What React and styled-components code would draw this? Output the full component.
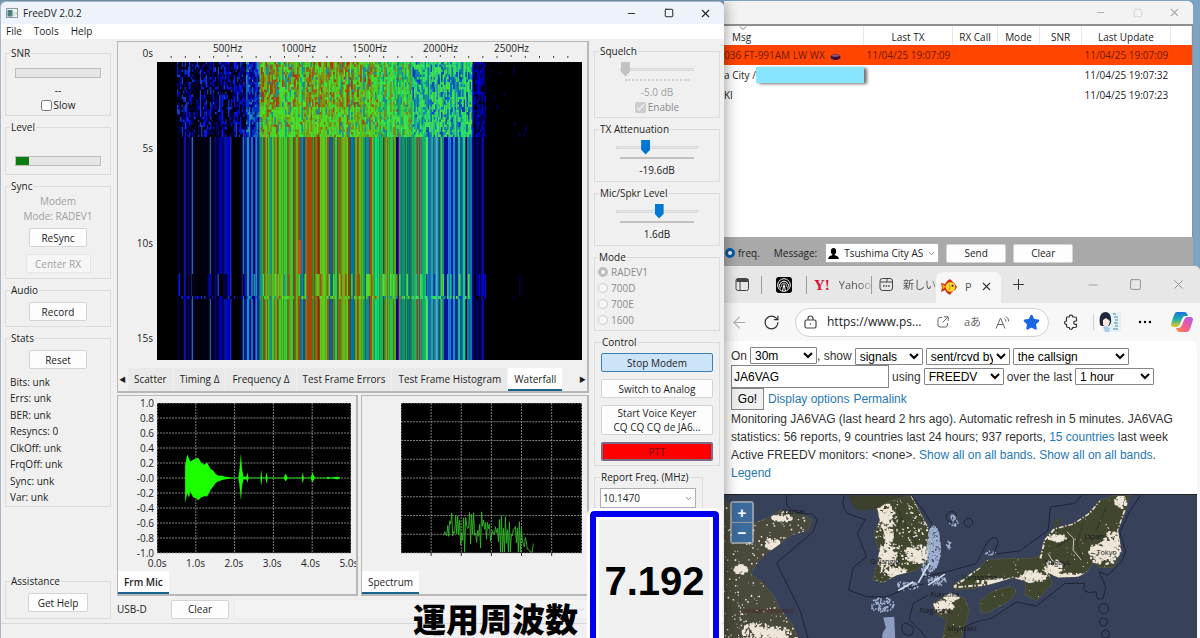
import { useState } from 'react';
import styled, { createGlobalStyle } from 'styled-components';
import { ArrowLeft, ChevronDown, Minus, Plus, RotateCw, Square, Star, X } from 'lucide-react';

const GlobalStyle = createGlobalStyle`
    * { box-sizing: border-box; }
    body {
        margin: 0;
        font-family: "Open Sans", "Noto Sans", "Noto Sans CJK JP", sans-serif;
        font-size: 10px;
        line-height: 14px;
        color: #1c1c1c;
    }
    button, input, select { font: inherit; color: inherit; margin: 0; }
`;

const Desktop = styled.div`
    display: grid;
    grid-template-columns: minmax(0, 724fr) minmax(0, 476fr);
    min-height: 100vh;
    padding-top: 1px;
    background: #7fa3c2;
    overflow: hidden;
`;

/* ---------- FreeDV window ---------- */

const MainWindow = styled.section`
    position: relative;
    z-index: 2;
    display: flex;
    flex-direction: column;
    min-width: 0;
    border-left: 1px solid #a9b7c6;
    border-top: 1px solid #a9b7c6;
    border-radius: 6px 6px 0 0;
    background: #f0f0f0;
    box-shadow: 2px 0 14px rgba(0, 0, 0, 0.35);
`;

const TitleBar = styled.header`
    display: flex;
    align-items: center;
    height: ${(p) => (p.$plain ? 23 : 22)}px;
    padding-left: 5px;
    gap: 5px;
    border-radius: 6px 6px 0 0;
    background: ${(p) => (p.$plain ? '#f3f3f3' : '#eef3fb')};
    color: ${(p) => (p.$plain ? '#aaa' : '#222')};
`;

const AppTitle = styled.h1`
    flex: 1;
    margin: 0;
    font-size: 10px;
    font-weight: 400;
`;

const WindowButtons = styled.div`
    display: flex;
`;

const WindowButton = styled.button`
    display: grid;
    place-items: center;
    width: 37px;
    height: 20px;
    padding: 0;
    border: 0;
    background: none;
    opacity: ${(p) => (p.$faint ? 0.4 : 1)};
`;

const MenuBar = styled.nav`
    display: flex;
    height: 15px;
    padding-left: 5px;
    gap: 12px;
    background: #fff;
    button {
        padding: 0;
        border: 0;
        background: none;
        line-height: 15px;
    }
`;

const Body = styled.div`
    flex: 1;
    display: flex;
    min-height: 0;
    padding: 0 4px;
`;

const SideColumn = styled.aside`
    display: flex;
    flex-direction: column;
    flex: none;
    width: ${(p) => p.$width}px;
    gap: 4px;
    padding: ${(p) => p.$top}px 0 4px;
`;

const Group = styled.fieldset`
    display: flex;
    flex-direction: column;
    align-items: ${(p) => (p.$left ? 'flex-start' : 'center')};
    width: ${(p) => p.$width || 'auto'};
    min-width: 0;
    min-height: ${(p) => p.$min}px;
    margin: ${(p) => (p.$bottom ? 'auto 0 0' : '0')};
    padding: ${(p) => p.$pad || '0 4px'};
    border: 1px solid #dcdcdc;
    legend {
        padding: 0 1px;
        line-height: 14px;
        white-space: nowrap;
    }
`;

const ControlGroup = styled(Group)`
    gap: 7px;
`;

const Gauge = styled.div`
    width: 86px;
    height: 10px;
    border: 1px solid #bcbcbc;
    background: #e6e6e6;
    div {
        height: 100%;
        background: #107c10;
    }
`;

const Gap = styled.div`
    height: ${(p) => p.$size}px;
`;

const CenterLine = styled.div`
    align-self: center;
`;

const Muted = styled.span`
    color: #a0a0a0;
    line-height: 15px;
`;

const Value = styled.output`
    color: ${(p) => (p.$off ? '#a0a0a0' : '#222')};
    line-height: 15px;
`;

const Check = styled.label`
    display: flex;
    align-items: center;
    gap: 2px;
    color: ${(p) => (p.$off ? '#8a8a8a' : '#222')};
    input {
        width: 11px;
        height: 11px;
    }
`;

const PushButton = styled.button`
    width: ${(p) => p.$width || '58px'};
    min-height: 19px;
    padding: 0 2px;
    border: 1px solid ${(p) => (p.$on ? '#3c7fb1' : '#d4d4d4')};
    border-radius: 2px;
    background: ${(p) => (p.$on ? '#cce4f7' : '#fdfdfd')};
    line-height: 14px;
    white-space: nowrap;
    &:disabled {
        border-color: #e6e6e6;
        background: #f6f6f6;
        color: #a0a0a0;
    }
`;

const PttButton = styled(PushButton)`
    border: 2px solid #7c6a86;
    background: #f00;
    color: #780808;
`;

const StatList = styled.ul`
    margin: 5px 0 0;
    padding: 0;
    list-style: none;
    li { height: 16px; line-height: 16px; }
    li:nth-child(even) { height: 17px; }
`;

const Centre = styled.main`
    flex: 1;
    display: flex;
    flex-direction: column;
    min-width: 0;
    margin: 2px 5px 0 6px;
`;

const PlotPanel = styled.section`
    display: flex;
    flex-direction: column;
    min-width: 0;
    border: 1px solid #b8b8b8;
    border-width: 1px 2px 2px 1px;
    overflow: hidden;
`;

const FrequencyAxis = styled.div`
    display: grid;
    grid-template-columns: repeat(5, 1fr);
    margin: 0 5px 0 39px;
    padding: 0 35px;
    text-align: center;
    line-height: 13px;
`;

const WaterfallRow = styled.div`
    display: grid;
    grid-template-columns: 35px minmax(0, 1fr);
    column-gap: 4px;
    padding-right: 5px;
    svg { display: block; width: 100%; }
`;

const TimeAxis = styled.div`
    display: grid;
    grid-auto-rows: 95px;
    height: 305px;
    margin-top: -9px;
    text-align: right;
    overflow: hidden;
`;

const TabStrip = styled.div`
    display: flex;
    align-items: center;
    margin-top: ${(p) => p.$top}px;
    gap: 1px;
`;

const TabArrow = styled.button`
    width: 9px;
    padding: 0;
    border: 0;
    background: none;
    font-size: 7px;
`;

const Tab = styled.button`
    height: 23px;
    padding: 0 6px;
    border: 0;
    border-bottom: 2px solid ${(p) => (p.$active ? '#1a648f' : 'transparent')};
    background: ${(p) => (p.$active ? '#fff' : '#e9e9e9')};
    font-weight: ${(p) => (p.$bold ? 600 : 400)};
    white-space: nowrap;
`;

const ScopeRow = styled.div`
    display: grid;
    grid-template-columns: 241fr 228fr;
    gap: 3px;
    margin-top: 2px;
`;

const Scope = styled.div`
    display: grid;
    grid-template-columns: 36px minmax(0, 1fr);
    column-gap: 3px;
    margin: 7px 5px 0 0;
    svg { display: block; width: 100%; height: 153px; }
`;

const LevelAxis = styled.div`
    display: flex;
    flex-direction: column;
    justify-content: space-between;
    height: 164px;
    margin: -7px 0;
    text-align: right;
`;

const SecondsAxis = styled.div`
    display: grid;
    grid-template-columns: repeat(6, 1fr);
    height: 14px;
    margin: 0 -12px 0 20px;
    text-align: center;
`;

const DeviceBar = styled.div`
    display: flex;
    align-items: center;
    margin-top: 2px;
    height: 22px;
    span { width: 54px; }
    label { margin-left: 5px; }
`;

const Combo = styled.label`
    display: flex;
    align-items: center;
    flex: ${(p) => (p.$grow ? 1 : 'none')};
    width: ${(p) => p.$width || 'auto'};
    height: 20px;
    padding: 0 2px;
    border: 1px solid ${(p) => (p.$off ? '#ebebeb' : '#b0b0b0')};
    background: ${(p) => (p.$off ? '#f3f3f3' : '#fff')};
    select {
        flex: 1;
        min-width: 0;
        padding: 0;
        border: 0;
        background: none;
        appearance: none;
    }
    svg { flex: none; }
`;

const Slider = styled.input`
    appearance: none;
    width: ${(p) => p.$width}px;
    height: 16px;
    background: none;
    &::-webkit-slider-runnable-track {
        height: 3px;
        border: 1px solid #d6d6d6;
        background: #e9eaea;
    }
    &::-webkit-slider-thumb {
        appearance: none;
        width: 9px;
        height: 15px;
        margin-top: -7px;
        background: ${(p) => (p.disabled ? '#c3c3c3' : '#0078d4')};
        clip-path: polygon(0 0, 100% 0, 100% 68%, 50% 100%, 0 68%);
    }
`;

const TickLine = styled.div`
    width: ${(p) => p.$width}px;
    margin: 2px 0 4px;
    border-top: 2px ${(p) => (p.$off ? 'dotted #cfcfcf' : 'solid #c2c2c2')};
`;

const Radio = styled.label`
    display: flex;
    align-items: center;
    gap: 3px;
    height: 16px;
    color: ${(p) => (p.$dark ? '#222' : '#8a8a8a')};
    input {
        appearance: none;
        width: 10px;
        height: 10px;
        border: 1px solid #cdcdcd;
        border-radius: 50%;
        background: #f6f6f6;
    }
    input:checked {
        border: 3px solid ${(p) => (p.$dark ? '#0a5ca4' : '#bdbdbd')};
    }
`;

const StatusBar = styled.footer`
    height: 15px;
    border-top: 1px solid #d8d8d8;
`;

const Callout = styled.div`
    position: absolute;
    right: 5px;
    bottom: -12px;
    display: grid;
    place-items: center;
    width: 129px;
    height: 139px;
    border: 6px solid #0000f0;
    border-radius: 4px;
    outline: 3px solid #fff;
    box-shadow: inset 0 0 0 3px #fff;
    background: #f0f0f0;
    color: #000;
    font-family: "Liberation Sans", Arial, sans-serif;
    font-size: 40px;
    font-weight: 700;
`;

const Caption = styled.strong`
    position: absolute;
    right: 146px;
    bottom: 2px;
    color: #000;
    font-family: "Noto Sans CJK JP", sans-serif;
    font-size: 33px;
    font-weight: 900;
    line-height: 36px;
`;

/* ---------- right side windows ---------- */

const RightSide = styled.div`
    display: flex;
    flex-direction: column;
    min-width: 0;
`;

const Reporter = styled.section`
    display: flex;
    flex-direction: column;
    height: 264px;
    margin-right: 7px;
    background: #fff;
    border-radius: 0 6px 0 0;
`;

const StationArea = styled.div`
    flex: 1;
    border: 2px solid #909090;
    border-width: 2px 1px 0 0;
    overflow: hidden;
`;

const StationTable = styled.table`
    width: 100%;
    border-collapse: collapse;
    table-layout: fixed;
    th {
        height: 19px;
        padding: 2px 0 0;
        border-right: 1px solid #e8e8e8;
        font-weight: 400;
    }
    th:first-child { padding-left: 8px; text-align: left; }
    td {
        height: 20px;
        padding: 0 0 0 3px;
        white-space: nowrap;
    }
    td:first-child { padding-left: 0; }
`;

const StationRow = styled.tr`
    background: ${(p) => (p.$alert ? '#ff4500' : 'transparent')};
    color: ${(p) => (p.$alert ? '#701800' : '#1c1c1c')};
`;

const MessageCell = styled.div`
    display: flex;
    align-items: center;
    height: 19px;
`;

const Redaction = styled.span`
    flex: 1;
    height: 16px;
    background: #87e5ff;
    box-shadow: 3px 1px 3px rgba(0, 0, 0, 0.55);
`;

const SortHeader = styled.div`
    display: grid;
    justify-items: start;
    height: 18px;
    margin-top: -3px;
    line-height: 13px;
    svg { margin-left: 7px; }
`;

const ReporterBar = styled.form`
    display: flex;
    align-items: center;
    height: 28px;
    padding: 4px 0 0 1px;
    background: #a9a9a9;
    button { margin-left: 7px; }
`;

const MessageLabel = styled.label`
    margin: 0 8px 0 14px;
`;

const MessageSelect = styled.select`
    margin-left: 5px;
`;

const Browser = styled.section`
    flex: 1;
    display: flex;
    flex-direction: column;
    min-width: 0;
    border-top: 1px solid #a7a7a7;
    border-radius: 0 6px 0 0;
    background: #f7f7f7;
`;

const TabsRow = styled.div`
    display: flex;
    align-items: center;
    height: 37px;
    border-radius: 0 6px 0 0;
    background: #e7e7e7;
    color: #555;
    font-size: 11px;
`;

const BrowserTab = styled.div`
    display: flex;
    align-items: center;
    justify-content: ${(p) => (p.$icon ? 'center' : 'flex-start')};
    flex: none;
    width: ${(p) => p.$width}px;
    height: 18px;
    padding-left: ${(p) => (p.$icon ? 0 : 7)}px;
    gap: 9px;
    border-right: 1px solid ${(p) => (p.$last ? 'transparent' : '#9c9c9c')};
    overflow: hidden;
    white-space: nowrap;
    svg { flex: none; }
    span { mask-image: linear-gradient(90deg, #000 60%, transparent); }
`;

const YahooMark = styled.b`
    color: #d8103c;
    font-family: "Liberation Serif", serif;
    font-size: 15px;
`;

const ActiveTab = styled.div`
    display: flex;
    align-items: center;
    flex: none;
    width: 65px;
    height: 31px;
    margin-top: 6px;
    padding: 0 5px 2px;
    gap: 8px;
    border-radius: 7px 7px 0 0;
    background: #f7f7f7;
`;

const IconButton = styled.button`
    display: grid;
    place-items: center;
    flex: none;
    width: ${(p) => p.$width}px;
    height: 26px;
    padding: 0;
    border: 0;
    background: none;
    color: ${(p) => p.$color || '#333'};
`;

const Spacer = styled.div`
    flex: 1;
`;

const Toolbar = styled.div`
    display: flex;
    align-items: center;
    height: 38px;
    font-size: 11px;
`;

const Address = styled.div`
    display: flex;
    align-items: center;
    flex: 1;
    min-width: 0;
    height: 29px;
    padding: 0 4px 0 8px;
    margin-left: 6px;
    border: 1px solid #d2d2d2;
    border-radius: 15px;
    background: #fff;
    svg { flex: none; }
    input {
        flex: 1;
        min-width: 0;
        padding: 0 0 0 10px;
        border: 0;
        background: none;
        font-size: 12px;
    }
`;

const Divider = styled.i`
    width: 1px;
    height: 16px;
    background: #d0d0d0;
`;

const Page = styled.div`
    flex: 1;
    display: flex;
    flex-direction: column;
    margin-right: 3px;
    border-radius: 7px 7px 0 0;
    background: #fff;
    color: #333;
    font-family: "Liberation Sans", Arial, sans-serif;
    font-size: 12px;
    line-height: 18px;
    a { color: #1f78b4; text-decoration: none; }
`;

const Filters = styled.form`
    padding: 6px 0 0 7px;
`;

const FilterRow = styled.div`
    display: flex;
    align-items: center;
    height: ${(p) => p.$height}px;
    gap: ${(p) => p.$gap || 3}px;
    white-space: nowrap;
`;

const PageSelect = styled.select`
    width: ${(p) => p.$width}px;
    height: 17px;
    border: 1px solid #858585;
    border-radius: 1px;
    background: #fff;
    color: #000;
`;

const CallInput = styled.input`
    width: 158px;
    height: 23px;
    padding: 0 2px;
    border: 1px solid #858585;
    color: #000;
`;

const GoButton = styled.button`
    width: 33px;
    height: 22px;
    padding: 0;
    border: 1px solid #858585;
    background: #f0f0f0;
    color: #000;
`;

const Summary = styled.p`
    margin: 0 7px 12px;
`;

const MapArea = styled.div`
    position: relative;
    flex: 1;
    min-height: 143px;
    border-top: 1px solid #222;
    background: #374159;
    overflow: hidden;
    svg { display: block; width: 100%; height: 143px; }
`;

const ZoomControl = styled.div`
    position: absolute;
    top: 6px;
    left: 6px;
    display: grid;
    gap: 1px;
    padding: 2px;
    border-radius: 3px;
    background: rgba(200, 210, 220, 0.6);
    button {
        width: 20px;
        height: 19px;
        padding: 0;
        border: 0;
        background: #3b6a9c;
        color: #fff;
        font-size: 15px;
        font-weight: 700;
        line-height: 16px;
    }
`;

/* ---------- plots ---------- */

const seeded = (seed) => {
    let s = seed;
    return () => {
        s = (s * 16807) % 2147483647;
        return s / 2147483647;
    };
};

// start column (thirds of a pixel) and colour of every stripe
const STRIPES = `0 000,62 000048,67 000,80 1010a0,88 000020,93 000050,104 3068b8,109 000010,158 2858a8,163 000018,
173 0000a0,178 000040,185 0000a0,195 000060,200 0010a0,210 0000c8,220 1838e0,224 000,252 000060,257 2878b8,262 0020a0,
270 2090c0,276 001890,282 1870b0,288 000080,295 2888c0,300 0028a0,307 189070,315 38b030,320 a04010,324 48c028,330 905010,
333 40c838,339 188898,345 58c028,352 70a020,360 985018,364 50c820,380 38d038,392 98600f,396 48c030,410 a04010,415 60b028,
423 a84808,430 1888a0,438 0058a0,444 907018,450 a84808,466 40b030,472 986010,483 a02000,488 60c820,510 985810,516 1060a0,
527 708820,533 30c850,542 906018,550 70b018,570 50d820,574 a04808,580 0878a0,593 60a828,600 985808,606 60b818,618 08a070,
626 108898,638 b04810,645 58c830,652 08e078,667 20b858,678 085828,682 80a028,692 40b838,710 50a828,717 000090,725 a85888,
729 109070,745 20a060,752 107878,763 20b060,778 b07848,782 209868,787 a06040,792 08b078,804 40e060,813 1070b0,820 2898c8,
830 2080a0,835 40b8c0,845 0848b0,850 50d070,857 108098,862 0010b0,873 2878e0,882 0020b8,888 1898b0,894 0028a8,902 28b0a8,
910 1070b0,918 20c890,926 000048,930 1078a8,945 0000a8,950 000030,958 000080,965 000030,973 0808a8,981 000`
    .split(',')
    .map((s) => s.trim().split(' '))
    .map(([x, c]) => ({ x: Number(x) / 3, color: `#${c}` }));

const pick = (list, r) => list[Math.floor(r * list.length)];

const noiseColor = (x, y, r) => {
    if (x < 20) return null;
    if (x < 88) return pick(['#000', '#000', '#000018', '#000030', '#000058', '#000090', '#0008b8', '#0818e0', '#1040c8'], r);
    if (x < 102) return pick(['#0030c8', '#0868b8', '#1890b8', '#000080', '#0020e0'], r);
    if (x < 220) {
        const hot = y < 45 ? ['#a05010', '#889018', '#b03808', '#807818'] : ['#48d828', '#58d820', '#a05010', '#789018'];
        return pick([...hot, '#48d828', '#30e838', '#70b818', '#789018', '#58c020', '#50e030', '#1890a0'], r);
    }
    if (x < 255) return pick(['#38e848', '#58c828', '#18b068', '#28d858', '#808820', '#1888a0', '#40e040'], r);
    if (x < 315) return pick(['#38e850', '#28d870', '#1890a0', '#1070b8', '#48e048', '#0040c0', '#20c080', '#30e060'], r);
    if (x < 328) return pick(['#0000a0', '#0000e0', '#000050', '#000'], r);
    return x < 370 && r > 0.95 ? '#000048' : null;
};

const noiseCells = (() => {
    const rnd = seeded(4242);
    const byColor = {};
    const fill = (y0, y1, step, keep, hold) => {
        for (let x = 20; x < 370; x += 1.5) {
            const stripe = rnd();
            let last = rnd();
            for (let y = y0; y < y1; y += step) {
                const r = rnd();
                if (r > hold) last = rnd() > 0.3 ? rnd() : stripe;
                const color = noiseColor(x, y, last);
                if (color && rnd() < keep) {
                    byColor[color] = `${byColor[color] || ''}M${x} ${y}h1.6v${step}h-1.6z`;
                }
            }
        }
    };
    fill(0, 75, 2.5, 1, 0.4);
    fill(212, 234, 22, 0.35, 0);
    fill(234, 237, 3, 0.7, 0);
    return Object.entries(byColor);
})();

const Waterfall = () => (
    <svg viewBox="0 0 425 305" height="305" preserveAspectRatio="none" role="img" aria-label="Waterfall">
        <path d={Array.from({ length: 29 }, (_, i) => `M${((i + 1) * 425) / 30} ${i % 5 === 4 ? 0 : 1}v2`).join('')} stroke="#444" />
        <g transform="translate(0 7)">
            <rect width="425" height="298" fill="#000" />
            {STRIPES.map((s, i) => (
                <rect key={s.x} x={s.x} width={(STRIPES[i + 1]?.x ?? 425) - s.x} height="298" fill={s.color} />
            ))}
            {Array.from({ length: 54 }, (_, i) => (
                <rect key={i} x={104 + i * 4} width="1" y="75" height="223" fill="#042" opacity={i % 3 ? 0.22 : 0.08} />
            ))}
            {noiseCells.map(([color, d]) => (
                <path key={color} d={d} fill={color} />
            ))}
            <rect x="141" y="178" width="3" height="34" fill="#e04010" />
        </g>
    </svg>
);

const ENVELOPE = [
    [28, 12, 24], [30, 23, 15], [32, 19, 19], [33, 16, 13], [36, 18, 19], [39, 19, 20], [41, 20, 22], [44, 15, 19], [47, 13, 18],
    [50, 15, 18], [53, 9, 12], [56, 7, 8], [58, 4, 5], [61, 2, 3], [64, 2, 2], [68, 1, 1], [75, 0, 0], [81, 0, 0], [82, 7, 6],
    [83.5, 23, 21], [84.5, 9, 8], [86, 1, 1], [89, 1, 1], [90, 5, 4], [91, 0, 0], [103, 0, 0], [103.8, 7, 7], [104.6, 0, 0],
    [108, 0, 0], [109, 5, 5], [110, 0, 0], [126, 0, 0], [128, 4, 3], [130, 0, 0], [144, 0, 0], [145, 5, 5], [146, 0, 0],
    [153, 0, 0], [154.5, 5, 4], [157, 0, 0], [169, 0, 0], [170, 1, 1], [172, 0, 0], [180, 1, 1], [182, 0, 0],
];

const MicTrace = () => {
    const top = ENVELOPE.map(([x, up]) => `${x},${75 - up - 0.2}`);
    const bottom = [...ENVELOPE].reverse().map(([x, , down]) => `${x},${75 + down + 0.2}`);
    return (
        <svg viewBox="0 0 193 153" preserveAspectRatio="none" role="img" aria-label="Microphone level">
            <rect width="193" height="150" fill="#000" />
            <path
                d={[...Array.from({ length: 11 }, (_, i) => `M0 ${i * 15}H193`), ...Array.from({ length: 6 }, (_, i) => `M${i * 38.6} 0V150`)].join('')}
                stroke="#a0a0a0"
                strokeDasharray="2 1"
                strokeWidth="0.8"
            />
            <polygon points={[...top, ...bottom].join(' ')} fill="#1cff00" stroke="#2be81c" strokeWidth="0.2" />
        </svg>
    );
};

const spectrumLine = (() => {
    const rnd = seeded(99);
    const peaks = [[42, 149], [44, 116], [48, 101], [52, 105], [60, 107], [69, 107], [84, 106], [100, 113], [108, 110], [121, 116], [131, 128], [135, 149]];
    const crest = (x) => {
        const i = Math.max(1, peaks.findIndex((p) => p[0] >= x));
        const [x0, y0] = peaks[i - 1];
        const [x1, y1] = peaks[i];
        return y0 + ((y1 - y0) * (x - x0)) / (x1 - x0);
    };
    const points = [];
    for (let x = 43; x < 134; x += 1) {
        const c = crest(x);
        const y = x % 2 ? c + rnd() * 24 : c + 12 + rnd() * 30;
        points.push(`${x},${Math.min(149, y).toFixed(1)}`);
    }
    return points.join(' ');
})();

const SpectrumTrace = () => (
    <svg viewBox="0 0 182 153" preserveAspectRatio="none" role="img" aria-label="Spectrum">
        <rect width="182" height="150" fill="#000" />
        <path
            d={[...Array.from({ length: 9 }, (_, i) => `M0 ${i * 18.75}H182`), ...Array.from({ length: 7 }, (_, i) => `M${i * 30.3} 0V150`)].join('')}
            stroke="#a0a0a0"
            strokeDasharray="2 1"
            strokeWidth="0.8"
        />
        <path d="M30.3 150v3M60.6 150v3M90.9 150v3M121.2 150v3M151.5 150v3" stroke="#333" />
        <polyline points={spectrumLine} fill="none" stroke="#35b82b" strokeWidth="0.9" />
    </svg>
);

/* ---------- map ---------- */

const COASTS = {
    china: 'M12 55L30 75L100 130L150 110L180 90L240 100L275 118L265 150L215 165L175 195L140 220L115 245L92 280L130 310L160 345L180 385L215 430L235 474H12Z',
    korea: 'M470 85L510 62L575 46L600 95L625 140L628 200L622 245L590 270L530 285L490 308L458 300L470 255L478 215L462 160L480 120Z',
    honshu: 'M1180 46L1230 46L1218 90L1195 150L1205 215L1180 262L1140 262L1120 250L1102 275L1075 290L1015 292L985 278L998 310L950 362L915 345L918 305L880 292L820 310L760 325L705 330L700 315L780 262L800 240L850 235L935 235L962 225L972 180L1000 145L1060 130L1105 100L1140 60Z',
    kyushu: 'M640 370L690 338L735 355L748 390L735 440L722 474H668L680 420L645 400Z',
    shikoku: 'M778 365L815 335L870 318L890 332L872 360L810 395L785 398Z',
};

const CITY_GLOW = [
    [495, 110, 26, 42], [505, 165, 16, 22], [590, 220, 38, 28], [500, 230, 30, 45], [530, 275, 30, 14], [1150, 215, 46, 36],
    [1175, 190, 28, 42], [1000, 262, 28, 26], [935, 285, 40, 18], [665, 375, 34, 18], [690, 345, 26, 14], [155, 190, 22, 20],
    [180, 110, 32, 10], [110, 455, 50, 30], [170, 460, 40, 22], [1050, 285, 50, 8], [830, 300, 60, 7], [1200, 60, 18, 20],
    [1010, 170, 28, 10], [60, 265, 20, 14],
];

const cityLights = (() => {
    const rnd = seeded(777);
    let d = '';
    const dot = (x, y, s) => {
        d += `M${x.toFixed(1)} ${y.toFixed(1)}h${s.toFixed(1)}v${s.toFixed(1)}h-${s.toFixed(1)}z`;
    };
    for (let i = 0; i < 360; i++) dot(12 + rnd() * 270, 50 + rnd() * 430, 2 + rnd() * 3);
    for (let i = 0; i < 260; i++) dot(450 + rnd() * 180, 60 + rnd() * 250, 2 + rnd() * 4);
    for (let i = 0; i < 240; i++) dot(640 + rnd() * 590, 46 + rnd() * 430, 1.5 + rnd() * 2);
    CITY_GLOW.forEach(([cx, cy, rx, ry]) => {
        for (let i = 0; i < 60 + (rx * ry) / 7; i++) {
            const a = rnd() * 6.28;
            const r = rnd();
            dot(cx + Math.cos(a) * rx * r, cy + Math.sin(a) * ry * r, 3 + rnd() * 5);
        }
    });
    return d;
})();

const seaGlow = (() => {
    const rnd = seeded(31);
    const spots = [[640, 200, 20, 65], [620, 265, 18, 25], [560, 315, 34, 14], [650, 300, 30, 14], [485, 372, 36, 22], [700, 118, 14, 18], [685, 190, 8, 14], [808, 217, 18, 6]];
    return spots.map(([cx, cy, rx, ry], n) => {
        let d = '';
        for (let i = 0; i < (rx * ry) / (n ? 9 : 3); i++) {
            const a = rnd() * 6.28;
            const r = Math.sqrt(rnd());
            d += `M${(cx + Math.cos(a) * rx * r).toFixed(1)} ${(cy + Math.sin(a) * ry * r).toFixed(1)}h4v5h-4z`;
        }
        return d;
    }).join('');
})();

const PLACES = [
    ['Yantai', 190, 102], ['Gwangju', 450, 252], ['Hiroshima', 726, 300], ['Fukuoka', 632, 350], ['Nagasaki', 600, 400],
    ['Miyazaki', 682, 452], ['Japan', 1095, 176], ['Nagoya', 975, 254], ['Tokyo', 1130, 224],
];

const NightMap = () => (
    <svg viewBox="12 44 1420 430" preserveAspectRatio="none" role="img" aria-label="Map of Japan and Korea at night">
        <clipPath id="land">
            {Object.entries(COASTS).map(([name, d]) => <path key={name} d={d} />)}
        </clipPath>
        <path d="M385 46H565L500 70L470 88L410 90Z" fill="#3c412d" />
        {Object.entries(COASTS).map(([name, d]) => (
            <path key={name} d={d} fill={name === 'china' ? '#4a4a3c' : '#41462f'} stroke="#59594a" strokeWidth="2" />
        ))}
        <g fill="none" stroke="#2c331f" strokeWidth="4" opacity="0.6">
            <path d="M530 80L560 140L590 190M545 110L520 170M1090 130L1070 190L1090 240M1160 80L1130 150M1010 200L1060 170" />
        </g>
        <g clipPath="url(#land)">
            <path d="M780 262L700 322L820 312L880 292L930 305L985 285L1075 292L1105 275M962 235L974 180L1005 145L1060 130L1110 98L1140 60M575 46L604 98L628 150M1215 90L1195 150L1208 215" stroke="#eadfd4" strokeWidth="6" fill="none" strokeDasharray="14 5 4 6" />
            <path d={cityLights} fill="#efe6da" />
        </g>
        <path d={seaGlow} fill="#b3c4e6" opacity="0.85" />
        <path d="M490 412L523 410L526 474H488Q484 460 498 444Z" fill="#8d9dbf" />
        <path d="M595 308L628 250M535 332L580 305M625 315L675 282" stroke="#d5dff3" strokeWidth="5" />
        <path d="M1042 155L1062 175L1060 210L1085 240M1000 245L985 220" stroke="#cfc8b4" strokeWidth="3" fill="none" />
        <path d="M1000 140L1005 120L1025 112L1018 135Z" fill="#41462f" />
        <g fill="none" stroke="#1d2436" strokeWidth="3">
            <path d="M200 46V75Q225 105 275 100L292 118L280 155L170 248L240 390L264 474" />
            <path d="M372 46Q360 100 400 106L436 118L412 160L440 230L400 262L386 330L440 350H500L560 325L610 312" />
            <path d="M575 46L610 90L635 130M625 345L580 370L568 420L590 440L620 474" />
            <path d="M610 290L680 275L770 250L800 190Q825 155 835 185L822 222L900 212L985 150L992 80L1062 70L1085 46" />
            <path d="M1262 46L1232 90L1200 155L1218 215L1205 245L1165 285L1138 275L1158 320L1150 355Q1125 365 1130 335Q1080 345 1095 310H1035L950 378L890 366L815 415L770 425L735 440L735 474" />
            <circle cx="746" cy="127" r="13" />
            <circle cx="695" cy="110" r="16" />
            <circle cx="1152" cy="386" r="15" />
            <circle cx="1151" cy="426" r="12" />
            <circle cx="1157" cy="462" r="12" />
            <path d="M545 440Q555 420 568 435Q590 440 575 465Q545 470 545 440Z" />
        </g>
        <g fontFamily="Open Sans, sans-serif" fontSize="22" fill="#171a20">
            {PLACES.map(([name, x, y]) => <text key={name} x={x} y={y}>{name}</text>)}
            <text x="70" y="400" fontSize="17" fill="#4b2020">JIANGSU PROVINCE</text>
        </g>
    </svg>
);

/* ---------- small drawings ---------- */

const AppIcon = () => (
    <svg width="12" height="10" viewBox="0 0 12 10">
        <rect x="0.5" y="0.5" width="11" height="9" fill="#f5f5f5" stroke="#8b9aa0" />
        <rect x="1.5" y="2" width="5" height="6.5" fill="#4b8080" />
        <path d="M8 3v5M10 4v3" stroke="#b9c9c9" />
    </svg>
);

const PanelIcon = () => (
    <svg width="15" height="15" viewBox="0 0 15 15" fill="none" stroke="#444">
        <rect x="1" y="1.5" width="12.5" height="12" rx="2" />
        <path d="M1.5 3.5H13" strokeWidth="3" />
        <path d="M5 4v9.5" />
    </svg>
);

const SignalIcon = () => (
    <svg width="16" height="16" viewBox="0 0 16 16" fill="none" stroke="#fff">
        <rect width="16" height="16" rx="3" fill="#000" stroke="none" />
        <circle cx="8" cy="8" r="6.3" />
        <path d="M4.5 11.5a4.5 4.5 0 1 1 7 0" />
        <path d="M6 10a2.5 2.5 0 1 1 4 0" strokeWidth="0.8" />
        <path d="M8 7.5L6.5 14.2M8 7.5L9.5 14.2" />
    </svg>
);

const NewsIcon = () => (
    <svg width="15" height="15" viewBox="0 0 15 15" fill="none" stroke="#444">
        <rect x="1" y="1.5" width="12.5" height="12" rx="2.5" />
        <path d="M1 5h7V2M8 5h5" />
        <path d="M4 9h1.5M6.6 9h1.5M9.2 9h1.5" strokeWidth="1.6" />
    </svg>
);

const FishIcon = () => (
    <svg width="16" height="16" viewBox="0 0 16 16">
        <path d="M0 4l4 1 2-3 3-2 2 2 3 3 2 3-2 3-3 2-2 3-3-2-2-3-4 2 1-4z" fill="#d42a10" />
        <circle cx="9.5" cy="8" r="4.8" fill="#ffd928" />
        <path d="M1.3 5.2l4 2.3-3.5 2.8z" fill="#ffb000" />
        <path d="M8 5.5q2.5 2 0 5.5" stroke="#d88a10" fill="none" />
        <circle cx="11.5" cy="6.8" r="1" fill="#222" />
    </svg>
);

const LockIcon = () => (
    <svg width="13" height="14" viewBox="0 0 13 14" fill="none" stroke="#444" strokeWidth="1.2">
        <rect x="1" y="5" width="11" height="8" rx="1.5" />
        <path d="M4 5V3.5a2.5 2.5 0 0 1 5 0V5" />
        <circle cx="6.5" cy="9" r="0.8" fill="#444" stroke="none" />
    </svg>
);

const OpenIcon = () => (
    <svg width="12" height="12" viewBox="0 0 12 12" fill="none" stroke="#666">
        <path d="M5 1.5H3a2 2 0 0 0-2 2V9a2 2 0 0 0 2 2h5.5a2 2 0 0 0 2-2V7M7 .8h4.2V5M11 1L5.5 6.5" />
    </svg>
);

const ReadIcon = () => (
    <svg width="16" height="15" viewBox="0 0 16 15" fill="none" stroke="#666">
        <path d="M1 13.5L5.5 3 10 13.5M2.7 9.5h5.6M9.5 3.5q1.5 1 1.5 3M11 1.5q2.5 1.5 2.8 5" />
    </svg>
);

const PuzzleIcon = () => (
    <svg width="16" height="16" viewBox="0 0 16 16" fill="none" stroke="#333" strokeWidth="1.2">
        <path d="M4 3h2.2a1.8 1.8 0 0 1 3.6 0H12a1.5 1.5 0 0 1 1.5 1.5V7h-1a1.7 1.7 0 0 0 0 3.4h1V12a1.5 1.5 0 0 1-1.5 1.5H9.8a1.8 1.8 0 0 1-3.6 0H5A1.5 1.5 0 0 1 3.5 12v-1.6a1.7 1.7 0 0 1-.5-3.4h.5V4.5A1.5 1.5 0 0 1 4 3z" />
    </svg>
);

const Avatar = () => (
    <svg width="22" height="22" viewBox="0 0 22 22">
        <path d="M11 1h11v20H8z" fill="#e5f2f6" />
        <path d="M14 3h3M15 6h4M16 9h3M15 12h4M16 15h3M14 18h5" stroke="#4d8795" />
        <path d="M1 14Q-1 1 7 1Q13 2 12 12L10 15H3Z" fill="#20263c" />
        <path d="M4 9l3-2 4 3-1 4-3 2-3-2z" fill="#fbe9e2" />
        <path d="M4 16l3-1 4 2-1 4H6z" fill="#a8cde8" />
    </svg>
);

const CopilotIcon = () => (
    <svg width="22" height="20" viewBox="0 0 22 20">
        <defs>
            <linearGradient id="cool" x1="0" y1="0" x2="0" y2="1">
                <stop offset="0" stopColor="#1a6fe0" />
                <stop offset="0.5" stopColor="#22b3a6" />
                <stop offset="1" stopColor="#f2c61c" />
            </linearGradient>
            <linearGradient id="warm" x1="1" y1="0" x2="0" y2="1">
                <stop offset="0" stopColor="#a45cf0" />
                <stop offset="0.5" stopColor="#f05a9c" />
                <stop offset="1" stopColor="#fb8a3c" />
            </linearGradient>
        </defs>
        <path d="M6 0h7q3 0 4 4h-3q-2 0-3 3l-2 5q-1 3-3 3H3q-4 0-2.5-4.5L3 3Q4 0 6 0z" fill="url(#cool)" />
        <path d="M16 20H9q-3 0-4-4h3q2 0 3-3l2-5q1-3 3-3h3q4 0 2.5 4.5L19 17q-1 3-3 3z" fill="url(#warm)" />
    </svg>
);

const PersonIcon = () => (
    <svg width="11" height="11" viewBox="0 0 11 11" fill="#000">
        <ellipse cx="5.5" cy="3.3" rx="2.6" ry="3.2" />
        <path d="M4.3 5h2.4v2.2Q10.8 8 10.8 11H.2Q.2 8 4.3 7.2z" />
    </svg>
);

const SortMark = () => (
    <svg width="8" height="4" viewBox="0 0 8 4" fill="none" stroke="#777">
        <path d="M1 0.5l3 3 3-3" />
    </svg>
);

const Controls = ({ fixed }) => (
    <WindowButtons>
        <WindowButton aria-label="Minimize"><Minus size={11} strokeWidth={2} /></WindowButton>
        <WindowButton aria-label="Maximize" $faint={fixed}><Square size={10} strokeWidth={2.4} /></WindowButton>
        <WindowButton aria-label="Close"><X size={13} strokeWidth={2} /></WindowButton>
    </WindowButtons>
);

/* ---------- sections ---------- */

const TABS = ['Scatter', 'Timing Δ', 'Frequency Δ', 'Test Frame Errors', 'Test Frame Histogram', 'Waterfall'];
const STATS = ['Bits: unk', 'Errs: unk', 'BER: unk', 'Resyncs: 0', 'ClkOff: unk', 'FrqOff: unk', 'Sync: unk', 'Var: unk'];
const LEVELS = ['1.0', '0.8', '0.6', '0.4', '0.2', '-0.0', '-0.2', '-0.4', '-0.6', '-0.8', '-1.0'];

const StatusColumn = () => (
    <SideColumn $width={106} $top={7}>
        <Group $min={70} $pad="8px 4px 0">
            <legend>SNR</legend>
            <Gauge role="progressbar" aria-label="SNR" />
            <Gap $size={5} />
            <Value>--</Value>
            <Check><input type="checkbox" /> Slow</Check>
        </Group>
        <Group $min={55} $pad="22px 4px 0">
            <legend>Level</legend>
            <Gauge role="progressbar" aria-label="Level" aria-valuenow={16}>
                <div style={{ width: '16%' }} />
            </Gauge>
        </Group>
        <Group $min={100} $pad="1px 4px 0">
            <legend>Sync</legend>
            <Muted>Modem</Muted>
            <Muted>Mode: RADEV1</Muted>
            <Gap $size={4} />
            <PushButton>ReSync</PushButton>
            <Gap $size={7} />
            <PushButton $width="65px" disabled>Center RX</PushButton>
        </Group>
        <Group $min={44} $pad="5px 4px 0">
            <legend>Audio</legend>
            <PushButton>Record</PushButton>
        </Group>
        <Group $min={176} $pad="5px 4px 0" $left>
            <legend>Stats</legend>
            <CenterLine><PushButton>Reset</PushButton></CenterLine>
            <StatList>
                {STATS.map((s) => <li key={s}>{s}</li>)}
            </StatList>
        </Group>
        <Group $min={45} $pad="5px 4px 0" $bottom>
            <legend>Assistance</legend>
            <PushButton $width="60px">Get Help</PushButton>
        </Group>
    </SideColumn>
);

const Plots = () => {
    const [tab, setTab] = useState('Waterfall');

    return (
        <Centre>
            <PlotPanel>
                <FrequencyAxis>
                    {[500, 1000, 1500, 2000, 2500].map((hz) => <span key={hz}>{hz}Hz</span>)}
                </FrequencyAxis>
                <WaterfallRow>
                    <TimeAxis>
                        {['0s', '5s', '10s', '15s'].map((t) => <span key={t}>{t}</span>)}
                    </TimeAxis>
                    <Waterfall />
                </WaterfallRow>
                <TabStrip $top={8}>
                    <TabArrow aria-label="Previous tabs">◀</TabArrow>
                    {TABS.map((name) => (
                        <Tab key={name} $active={name === tab} onClick={() => setTab(name)}>{name}</Tab>
                    ))}
                    <Spacer />
                    <TabArrow aria-label="More tabs">▶</TabArrow>
                </TabStrip>
            </PlotPanel>
            <ScopeRow>
                <PlotPanel>
                    <Scope>
                        <LevelAxis>
                            {LEVELS.map((v) => <span key={v}>{v}</span>)}
                        </LevelAxis>
                        <MicTrace />
                    </Scope>
                    <SecondsAxis>
                        {['0.0s', '1.0s', '2.0s', '3.0s', '4.0s', '5.0s'].map((t) => <span key={t}>{t}</span>)}
                    </SecondsAxis>
                    <TabStrip $top={1}>
                        <Tab $active $bold>Frm Mic</Tab>
                    </TabStrip>
                </PlotPanel>
                <PlotPanel>
                    <Scope>
                        <div />
                        <SpectrumTrace />
                    </Scope>
                    <TabStrip $top={15}>
                        <Tab $active>Spectrum</Tab>
                    </TabStrip>
                </PlotPanel>
            </ScopeRow>
            <DeviceBar>
                <span>USB-D</span>
                <PushButton>Clear</PushButton>
                <Combo $grow $off>
                    <select aria-label="Status message" disabled />
                    <ChevronDown size={9} color="#c0c0c0" />
                </Combo>
            </DeviceBar>
        </Centre>
    );
};

const RadioColumn = () => (
    <SideColumn $width={126} $top={5}>
        <Group $min={74} $pad="3px 4px 0">
            <legend>Squelch</legend>
            <Slider type="range" aria-label="Squelch" $width={74} defaultValue={0} disabled />
            <TickLine $width={64} $off />
            <Value $off>-5.0 dB</Value>
            <Check $off><input type="checkbox" defaultChecked disabled /> Enable</Check>
        </Group>
        <Group $min={60} $pad="3px 4px 0">
            <legend>TX Attenuation</legend>
            <Slider type="range" aria-label="TX Attenuation" $width={82} defaultValue={34} />
            <TickLine $width={74} />
            <Value>-19.6dB</Value>
        </Group>
        <Group $min={60} $pad="3px 4px 0">
            <legend>Mic/Spkr Level</legend>
            <Slider type="range" aria-label="Mic/Spkr Level" $width={82} defaultValue={53} />
            <TickLine $width={74} />
            <Value>1.6dB</Value>
        </Group>
        <Group $min={81} $pad="0 3px" $left>
            <legend>Mode</legend>
            {['RADEV1', '700D', '700E', '1600'].map((mode, i) => (
                <Radio key={mode}>
                    <input type="radio" name="mode" defaultChecked={i === 0} disabled /> {mode}
                </Radio>
            ))}
        </Group>
        <ControlGroup $min={130} $pad="4px 6px 4px">
            <legend>Control</legend>
            <PushButton $width="100%" $on>Stop Modem</PushButton>
            <PushButton $width="100%">Switch to Analog</PushButton>
            <PushButton $width="100%">
                Start Voice Keyer
                <br />
                CQ CQ CQ de JA6...
            </PushButton>
            <PttButton $width="100%">PTT</PttButton>
        </ControlGroup>
        <Group $min={60} $pad="4px 5px" $width="109px" $left>
            <legend>Report Freq. (MHz)</legend>
            <Combo $width="96px">
                <select aria-label="Report frequency"><option>10.1470</option></select>
                <ChevronDown size={9} color="#666" />
            </Combo>
        </Group>
    </SideColumn>
);

const ReporterWindow = () => (
    <Reporter>
        <TitleBar $plain>
            <Spacer />
            <Controls fixed />
        </TitleBar>
        <StationArea>
            <StationTable>
                <colgroup>
                    <col />
                    <col width="89" />
                    <col width="45" />
                    <col width="42" />
                    <col width="42" />
                    <col width="89" />
                    <col width="21" />
                </colgroup>
                <thead>
                    <tr>
                        <th><SortHeader><SortMark />Msg</SortHeader></th>
                        <th>Last TX</th>
                        <th>RX Call</th>
                        <th>Mode</th>
                        <th>SNR</th>
                        <th>Last Update</th>
                        <th aria-label="More" />
                    </tr>
                </thead>
                <tbody>
                    <StationRow $alert>
                        <td>
                            <MessageCell>
                                036 FT-991AM LW WX&nbsp;&nbsp;
                                <svg width="11" height="9" viewBox="0 0 11 9">
                                    <ellipse cx="5.5" cy="6" rx="5" ry="3" fill="#35103c" />
                                    <ellipse cx="5.5" cy="4.5" rx="4" ry="1.3" fill="#96556a" />
                                </svg>
                            </MessageCell>
                        </td>
                        <td>11/04/25 19:07:09</td>
                        <td />
                        <td />
                        <td />
                        <td>11/04/25 19:07:09</td>
                        <td />
                    </StationRow>
                    <StationRow>
                        <td><MessageCell>a City /<Redaction /></MessageCell></td>
                        <td />
                        <td />
                        <td />
                        <td />
                        <td>11/04/25 19:07:32</td>
                        <td />
                    </StationRow>
                    <StationRow>
                        <td>KI</td>
                        <td />
                        <td />
                        <td />
                        <td />
                        <td>11/04/25 19:07:23</td>
                        <td />
                    </StationRow>
                </tbody>
            </StationTable>
        </StationArea>
        <ReporterBar onSubmit={(e) => e.preventDefault()}>
            <Radio $dark><input type="radio" name="track" defaultChecked /> freq.</Radio>
            <MessageLabel htmlFor="message">Message:</MessageLabel>
            <Combo as="div" $width="114px">
                <PersonIcon />
                <MessageSelect id="message"><option>Tsushima City AS</option></MessageSelect>
                <ChevronDown size={9} color="#666" />
            </Combo>
            <PushButton $width="60px">Send</PushButton>
            <PushButton $width="60px">Clear</PushButton>
        </ReporterBar>
    </Reporter>
);

const BrowserWindow = () => (
    <Browser>
        <TabsRow>
            <BrowserTab $width={38} $icon><PanelIcon /></BrowserTab>
            <BrowserTab $width={45} $icon><SignalIcon /></BrowserTab>
            <BrowserTab $width={65}><YahooMark>Y!</YahooMark><span>Yahoo!</span></BrowserTab>
            <BrowserTab $width={64} $last><NewsIcon /><span>新しいタ</span></BrowserTab>
            <ActiveTab>
                <FishIcon />
                <span>P</span>
                <X size={13} color="#333" />
            </ActiveTab>
            <IconButton $width={34} aria-label="New tab"><Plus size={17} strokeWidth={1.4} /></IconButton>
            <Spacer />
            <IconButton $width={43} $color="#999" aria-label="Minimize"><Minus size={14} strokeWidth={1.5} /></IconButton>
            <IconButton $width={43} $color="#888" aria-label="Maximize"><Square size={13} strokeWidth={1.6} /></IconButton>
            <IconButton $width={43} $color="#888" aria-label="Close"><X size={15} strokeWidth={1.5} /></IconButton>
        </TabsRow>
        <Toolbar>
            <IconButton $width={30} $color="#aaa" aria-label="Back"><ArrowLeft size={19} strokeWidth={1.3} /></IconButton>
            <IconButton $width={35} aria-label="Reload"><RotateCw size={17} strokeWidth={1.7} /></IconButton>
            <Address>
                <LockIcon />
                <input aria-label="Address" defaultValue="https://www.ps..." />
                <IconButton $width={28} aria-label="Open app"><OpenIcon /></IconButton>
                <IconButton $width={31} $color="#666" aria-label="Translate">aあ</IconButton>
                <IconButton $width={30} aria-label="Read aloud"><ReadIcon /></IconButton>
                <IconButton $width={26} $color="#1a66e0" aria-label="Favorite"><Star size={17} fill="#1a66e0" /></IconButton>
            </Address>
            <IconButton $width={44} aria-label="Extensions"><PuzzleIcon /></IconButton>
            <Divider />
            <IconButton $width={32} aria-label="Profile"><Avatar /></IconButton>
            <IconButton $width={37} aria-label="More">
                <svg width="14" height="4" viewBox="0 0 14 4">
                    <circle cx="2" cy="2" r="1.2" />
                    <circle cx="7" cy="2" r="1.2" />
                    <circle cx="12" cy="2" r="1.2" />
                </svg>
            </IconButton>
            <IconButton $width={37} aria-label="Copilot"><CopilotIcon /></IconButton>
        </Toolbar>
        <Page>
            <Filters onSubmit={(e) => e.preventDefault()}>
                <FilterRow $height={18}>
                    <label htmlFor="band">On</label>
                    <div>
                        <PageSelect id="band" $width={67}><option>30m</option></PageSelect>
                        <label htmlFor="show">, show</label>
                    </div>
                    <PageSelect id="show" $width={68}><option>signals</option></PageSelect>
                    <PageSelect aria-label="Direction" $width={84}><option>sent/rcvd by</option></PageSelect>
                    <PageSelect aria-label="Party" $width={116}><option>the callsign</option></PageSelect>
                </FilterRow>
                <FilterRow $height={23}>
                    <CallInput aria-label="Callsign" defaultValue="JA6VAG" />
                    <label htmlFor="using">using</label>
                    <PageSelect id="using" $width={80}><option>FREEDV</option></PageSelect>
                    <label htmlFor="last">over the last</label>
                    <PageSelect id="last" $width={79}><option>1 hour</option></PageSelect>
                </FilterRow>
                <FilterRow $height={22} $gap={4}>
                    <GoButton>Go!</GoButton>
                    <a href="#options">Display options</a>
                    <a href="#permalink">Permalink</a>
                </FilterRow>
            </Filters>
            <Summary>
                Monitoring JA6VAG (last heard 2 hrs ago). Automatic refresh in 5 minutes. JA6VAG
                statistics: 56 reports, 9 countries last 24 hours; 937 reports, <a href="#countries">15 countries</a> last week
                <br />
                Active FREEDV monitors: &lt;none&gt;. <a href="#all">Show all on all bands</a>. <a href="#bands">Show all on all bands</a>.
                <br />
                <a href="#legend">Legend</a>
            </Summary>
            <MapArea>
                <NightMap />
                <ZoomControl>
                    <button aria-label="Zoom in">+</button>
                    <button aria-label="Zoom out">−</button>
                </ZoomControl>
            </MapArea>
        </Page>
    </Browser>
);

const App = () => {
    return (
        <>
            <GlobalStyle />
            <Desktop>
                <MainWindow>
                    <TitleBar>
                        <AppIcon />
                        <AppTitle>FreeDV 2.0.2</AppTitle>
                        <Controls />
                    </TitleBar>
                    <MenuBar>
                        <button>File</button>
                        <button>Tools</button>
                        <button>Help</button>
                    </MenuBar>
                    <Body>
                        <StatusColumn />
                        <Plots />
                        <RadioColumn />
                    </Body>
                    <StatusBar />
                    <Caption>運用周波数</Caption>
                    <Callout>7.192</Callout>
                </MainWindow>
                <RightSide>
                    <ReporterWindow />
                    <BrowserWindow />
                </RightSide>
            </Desktop>
        </>
    );
};

export default App;
